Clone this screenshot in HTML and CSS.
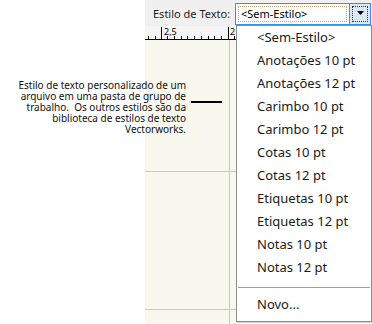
FILE: index.html
```html
<!DOCTYPE html>
<html>
<head>
<meta charset="utf-8">
<link rel="stylesheet" href="styles.css">
</head>
<body>
<div class="page">
  <div class="side"></div>
  <div class="work">
    <div class="toolbar">
      <span class="label">Estilo de Texto:</span>
      <div class="combo">
        <div class="field"><span class="focus">&lt;Sem-Estilo&gt;</span></div>
        <div class="btn"><span class="btn-focus"><svg width="9" height="5" viewBox="0 0 9 5"><path d="M1 0h7L4.5 4z" fill="#000"/></svg></span></div>
      </div>
    </div>
    <div class="ruler">
      <svg width="91" height="14" viewBox="0 0 91 14">
        <path d="M0 13.5H91" stroke="#000" stroke-width="1"/>
        <path d="M16.5 1V14M83.5 1V14" stroke="#000" stroke-width="1"/>
        <path d="M3.5 10V14M10.5 10V14M22.5 10V14M29.5 10V14M36.5 10V14M42.5 10V14M49.5 10V14M56.5 10V14M63.5 10V14M69.5 10V14M76.5 10V14M89.5 10V14" stroke="#000" stroke-width="1"/>
        <text x="19" y="9" font-family="Noto Sans, sans-serif" font-size="9" fill="#000">2,5</text>
        <text x="85" y="9" font-family="Noto Sans, sans-serif" font-size="9" fill="#000">2</text>
      </svg>
    </div>
    <div class="canvas">
      <div class="guide-v"></div>
      <div class="guide-h g1"></div>
      <div class="guide-h g2"></div>
    </div>
  </div>

  <div class="callout">
    <p class="note">Estilo de texto personalizado de um arquivo em uma pasta de grupo de trabalho.&nbsp; Os outros estilos são da biblioteca de estilos de texto Vectorworks.</p>
    <span class="leader"></span>
  </div>

  <ul class="menu">
    <li>&lt;Sem-Estilo&gt;</li>
    <li>Anotações 10 pt</li>
    <li>Anotações 12 pt</li>
    <li>Carimbo 10 pt</li>
    <li>Carimbo 12 pt</li>
    <li>Cotas 10 pt</li>
    <li>Cotas 12 pt</li>
    <li>Etiquetas 10 pt</li>
    <li>Etiquetas 12 pt</li>
    <li>Notas 10 pt</li>
    <li>Notas 12 pt</li>
    <li class="sep"></li>
    <li>Novo...</li>
  </ul>
</div>
</body>
</html>
```
FILE: styles.css
```css
* { box-sizing: border-box; }
html, body { margin: 0; padding: 0; background: #fff; }
body { width: 372px; height: 324px; overflow: hidden; font-family: "Noto Sans", "Open Sans", sans-serif; color: #000; }

.page { position: relative; display: flex; width: 372px; height: 324px; }
.side { width: 145px; flex: none; background: #fff; }
.work { flex: 1; display: flex; flex-direction: column; }

.toolbar { height: 26px; background: #f0f0f0; display: flex; align-items: center; padding-left: 8px; }
.label { font-size: 11px; color: #1e1e1e; white-space: nowrap; }
.combo { margin-left: auto; margin-right: 1px; width: 136px; height: 22px; border: 1px solid #3c8fd8; background: #fff; display: flex; margin-top: 1px; }
.field { flex: 1; padding: 2px; }
.focus { display: block; height: 100%; border: 1px dotted #d4a86a; font-size: 11px; line-height: 14px; padding-left: 2px; color: #000; white-space: nowrap; }
.btn { width: 21px; background: #dbe8f5; border-left: 1px solid #3c8fd8; padding: 2px; }
.btn-focus { display: flex; align-items: center; justify-content: center; height: 100%; border: 1px dotted #333; }

.ruler { height: 14px; background: #f6f6f6; display: flex; }
.ruler svg { display: block; }

.canvas { position: relative; flex: 1; background: #f8f8ef; width: 91px; }
.guide-v { position: absolute; left: 84px; top: 0; bottom: 0; width: 1px; background: #a9d2f0; }
.guide-h { position: absolute; left: 0; width: 91px; height: 1px; background: #a9d2f0; }
.g1 { top: 131px; }
.g2 { top: 269px; }

.callout { position: absolute; left: 10px; top: 80px; display: flex; align-items: flex-start; gap: 5px; }
.note { margin: 0; width: 176px; text-align: right; font-size: 10px; line-height: 11px; color: #111; }
.leader { width: 31px; height: 2px; background: #000; margin-top: 21px; }

.menu { position: absolute; left: 236px; top: 25px; width: 136px; height: 297px; margin: 0; padding: 0 0 5px; list-style: none; background: #fff; border: 1px solid #8c8c8c; box-shadow: 1px 1px 0 #d0d0d0; }
.menu li { height: 23px; line-height: 23px; padding-left: 20px; font-size: 13px; color: #1a1a1a; white-space: nowrap; }
.menu li.sep { height: 1px; margin: 8px 1px 5px 1px; padding: 0; background: #a0a0a0; }
```
